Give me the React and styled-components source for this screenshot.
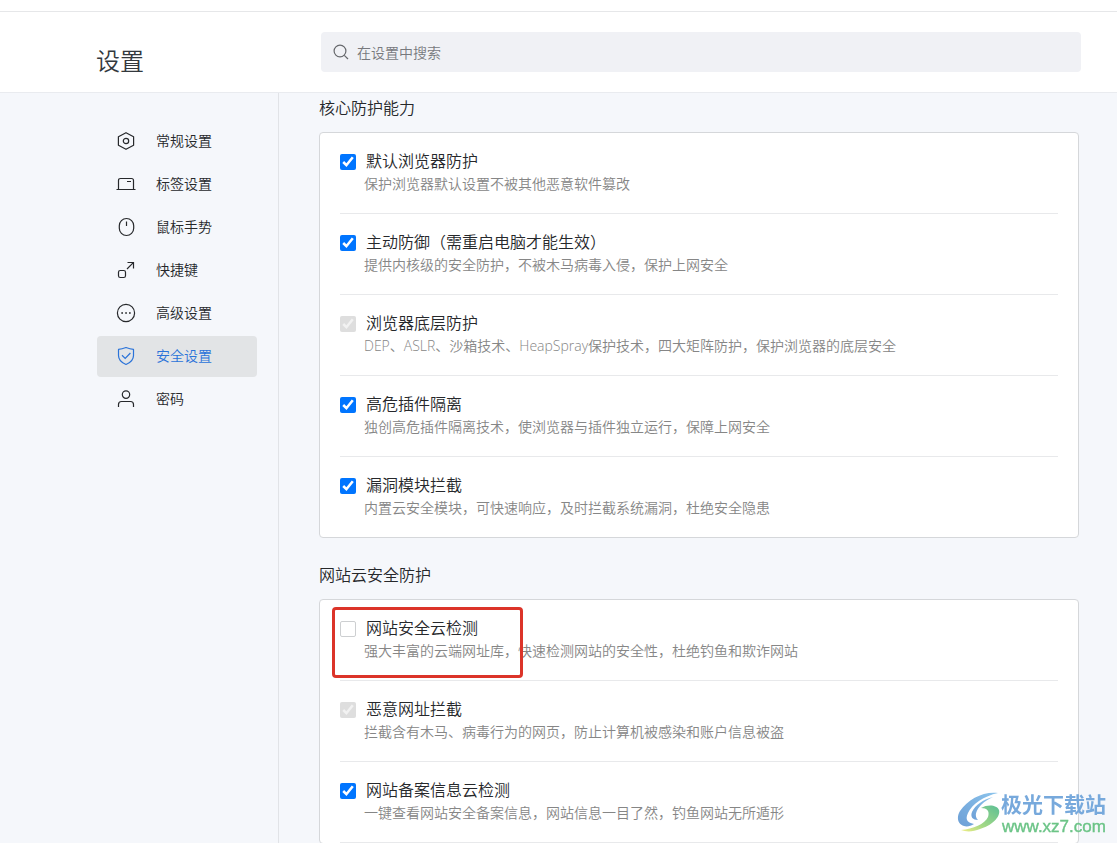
import React, { useState } from "react";
import styled, { createGlobalStyle } from "styled-components";

const GlobalStyle = createGlobalStyle`
  * { box-sizing: border-box; }
  body {
    margin: 0;
    background: #f5f7fb;
    color: #26282b;
    font-family: "Open Sans", "Noto Sans CJK SC", sans-serif;
    font-size: 14px;
    font-weight: 350;
  }
`;

const Page = styled.div`
  display: flex;
  flex-direction: column;
  height: 100vh;
  overflow: hidden;
`;

const TopStrip = styled.div`
  flex: none;
  height: 12px;
  background: #fff;
  border-bottom: 1px solid #e6e7e9;
`;

const Header = styled.header`
  flex: none;
  display: flex;
  align-items: flex-start;
  padding: 20px 36px 20px 96px;
  background: #fff;
  border-bottom: 1px solid #e9ebef;
`;

const PageTitle = styled.h1`
  flex: none;
  width: 225px;
  margin: 0;
  padding-top: 11px;
  font-size: 24px;
  line-height: 36px;
  height: 40px;
  font-weight: 350;
  color: #33383d;
`;

const SearchBox = styled.label`
  flex: 1;
  display: flex;
  align-items: center;
  gap: 8px;
  height: 40px;
  padding: 0 12px;
  border-radius: 4px;
  background: #f0f1f5;
`;

const SearchInput = styled.input`
  flex: 1;
  min-width: 0;
  padding: 2px 0 0;
  border: 0;
  outline: 0;
  background: transparent;
  font: inherit;
  line-height: 20px;
  color: #33383d;
  &::placeholder { color: #77797d; opacity: 1; }
`;

const Body = styled.div`
  flex: 1;
  min-height: 0;
  display: flex;
`;

const Sidebar = styled.nav`
  flex: none;
  display: flex;
  flex-direction: column;
  gap: 2px;
  width: 279px;
  padding: 28px 21px 0 97px;
  border-right: 1px solid #e1e3e7;
`;

const NavLink = styled.a`
  display: flex;
  align-items: center;
  gap: 20px;
  height: 41px;
  padding: 0 0 2px 19px;
  border-radius: 4px;
  line-height: 20px;
  text-decoration: none;
  color: ${(p) => (p.$active ? "#2a73d9" : "#26282b")};
  background: ${(p) => (p.$active ? "#e2e4e6" : "transparent")};
`;

const Icon = styled.svg`
  flex: none;
  fill: none;
  stroke: currentColor;
  stroke-width: 1.2;
`;

const SearchIcon = styled(Icon)`
  color: #66686c;
`;

const Content = styled.main`
  flex: 1;
  min-width: 0;
  display: flex;
  flex-direction: column;
  gap: 25px;
  padding: 3px 38px 0 40px;
  overflow: auto;
  scrollbar-width: none;
`;

const Section = styled.section`
  flex: none;
`;

const SectionTitle = styled.h2`
  margin: 0 0 12px;
  font-size: 16px;
  line-height: 24px;
  font-weight: inherit;
`;

const Card = styled.div`
  padding: 0 20px;
  border: 1px solid #d5d7da;
  border-radius: 4px;
  background: #fff;
`;

const Row = styled.div`
  position: relative;
  padding: 17px 0 19px;
  border-bottom: ${(p) => (p.$last ? "0" : "1px solid #e8e9eb")};
`;

const Option = styled.label`
  display: flex;
  align-items: center;
  gap: 10px;
  margin-bottom: 2px;
  font-size: 16px;
  line-height: 22px;
`;

const Checkbox = styled.input`
  flex: none;
  width: 16px;
  height: 16px;
  margin: 2px 0 0;
  &:not(:checked) {
    appearance: none;
    border: 1px solid #cdcfd1;
    border-radius: 2px;
    background: #fff;
  }
  &:disabled { opacity: 0.7; }
`;

const Description = styled.p`
  margin: 0;
  padding-left: 24px;
  line-height: 20px;
  color: #868686;
`;

const Highlight = styled.div`
  position: absolute;
  top: 7px;
  left: -8px;
  width: 191px;
  height: 71px;
  border: 3px solid #dc3429;
  border-radius: 4px;
  pointer-events: none;
`;

const Watermark = styled.div`
  position: fixed;
  right: 11px;
  bottom: 6px;
  display: flex;
  align-items: flex-end;
`;

const WatermarkText = styled.div`
  display: flex;
  flex-direction: column;
`;

const WatermarkName = styled.span`
  font-family: "Noto Sans CJK SC", sans-serif;
  font-size: 21px;
  line-height: 28px;
  font-weight: 700;
  color: #77a9dc;
`;

const WatermarkUrl = styled.span`
  padding-left: 1px;
  font-family: "Liberation Sans", sans-serif;
  font-size: 17px;
  line-height: 20px;
  color: #6cc487;
  -webkit-text-stroke: 0.4px #6cc487;
`;

const icons = {
  general: (
    <>
      <path d="M10 1.7 17.6 5.8V14.2L10 18.3 2.4 14.2V5.8Z" strokeLinejoin="round" />
      <circle cx="10" cy="10" r="2.7" />
    </>
  ),
  tabs: <path d="M.5 15.5H19.5M2.5 15.5V6.5Q2.5 4.5 4.5 4.5H15.5Q17.5 4.5 17.5 6.5V15.5M11 7.5H15" />,
  mouse: (
    <>
      <rect x="3.3" y="1.5" width="14.4" height="17" rx="7.2" />
      <path d="M10.5 4.5V9" />
    </>
  ),
  keys: (
    <>
      <rect x="2.5" y="10.5" width="7" height="7" rx="1.8" />
      <path d="M11 9 17.3 2.7M11.5 2.5H17.5V8.5" />
    </>
  ),
  advanced: (
    <>
      <circle cx="10" cy="10" r="8.6" />
      <path d="M5.3 10H7M9.2 10H10.9M13 10H14.7" strokeWidth="1.6" />
    </>
  ),
  security: (
    <>
      <path d="M2.5 3.4C5.6 3.1 7.4 2.5 10 1.5 12.6 2.5 14.4 3.1 17.5 3.4V9.5C17.5 13.9 14.4 16.7 10 18.5 5.6 16.7 2.5 13.9 2.5 9.5Z" strokeLinejoin="round" />
      <path d="M6 9.3 9.2 12.4 14.4 7" />
    </>
  ),
  password: (
    <>
      <circle cx="10" cy="5.6" r="3.7" />
      <path d="M2.5 18V15.5Q2.5 12.5 5.5 12.5H14.5Q17.5 12.5 17.5 15.5V18" />
    </>
  ),
};

const navItems = [
  { id: "general", label: "常规设置" },
  { id: "tabs", label: "标签设置" },
  { id: "mouse", label: "鼠标手势" },
  { id: "keys", label: "快捷键" },
  { id: "advanced", label: "高级设置" },
  { id: "security", label: "安全设置" },
  { id: "password", label: "密码" },
];

const coreOptions = [
  { id: "browser", title: "默认浏览器防护", text: "保护浏览器默认设置不被其他恶意软件篡改", on: true },
  { id: "active", title: "主动防御（需重启电脑才能生效）", text: "提供内核级的安全防护，不被木马病毒入侵，保护上网安全", on: true },
  { id: "base", title: "浏览器底层防护", text: "DEP、ASLR、沙箱技术、HeapSpray保护技术，四大矩阵防护，保护浏览器的底层安全", on: true, locked: true },
  { id: "plugin", title: "高危插件隔离", text: "独创高危插件隔离技术，使浏览器与插件独立运行，保障上网安全", on: true },
  { id: "leak", title: "漏洞模块拦截", text: "内置云安全模块，可快速响应，及时拦截系统漏洞，杜绝安全隐患", on: true, last: true },
];

const cloudOptions = [
  { id: "cloud", title: "网站安全云检测", text: "强大丰富的云端网址库，快速检测网站的安全性，杜绝钓鱼和欺诈网站", on: false, marked: true },
  { id: "malicious", title: "恶意网址拦截", text: "拦截含有木马、病毒行为的网页，防止计算机被感染和账户信息被盗", on: true, locked: true },
  { id: "record", title: "网站备案信息云检测", text: "一键查看网站安全备案信息，网站信息一目了然，钓鱼网站无所遁形", on: true },
];

function SettingRow({ option }) {
  const [on, setOn] = useState(option.on);
  return (
    <Row $last={option.last}>
      <Option htmlFor={option.id}>
        <Checkbox
          type="checkbox"
          id={option.id}
          checked={on}
          disabled={option.locked}
          aria-describedby={option.id + "-text"}
          onChange={(e) => setOn(e.target.checked)}
        />
        {option.title}
      </Option>
      <Description id={option.id + "-text"}>{option.text}</Description>
      {option.marked && <Highlight />}
    </Row>
  );
}

function SettingSection({ title, options }) {
  return (
    <Section>
      <SectionTitle>{title}</SectionTitle>
      <Card>
        {options.map((o) => (
          <SettingRow key={o.id} option={o} />
        ))}
      </Card>
    </Section>
  );
}

function Swirl() {
  return (
    <svg width="44" height="46" viewBox="0 0 44 46" aria-hidden="true">
      <defs>
        <linearGradient id="blue" x1="1" y1="0" x2="0" y2="1">
          <stop offset="0" stopColor="#8cc4ec" />
          <stop offset="1" stopColor="#6d9fd6" />
        </linearGradient>
        <linearGradient id="green" x1="1" y1="0" x2="0" y2="1">
          <stop offset="0" stopColor="#5cbf95" />
          <stop offset="0.6" stopColor="#a2d886" />
          <stop offset="1" stopColor="#f0ee86" />
        </linearGradient>
      </defs>
      <path d="M41 2C27 0 11 8 3 20-1 27 1 33 7 35 10 36 14 35 17 33 10 32 8 28 11 22 15 13 27 5 41 2Z" fill="url(#blue)" />
      <path d="M36 6C27 8 18 14 15 21 13 26 16 29 21 29 17 25 19 19 24 14 28 10 32 8 36 6Z" fill="url(#blue)" />
      <path d="M24 17C31 13 40 14 42 19 44 26 34 35 23 38 16 41 9 41 4 39 16 38 28 33 31 26 33 20 30 17 24 17Z" fill="url(#green)" />
    </svg>
  );
}

export default function App() {
  return (
    <Page>
      <GlobalStyle />
      <TopStrip />
      <Header>
        <PageTitle>设置</PageTitle>
        <SearchBox>
          <SearchIcon width="16" height="16" viewBox="0 0 16 16" aria-hidden="true">
            <circle cx="7" cy="7" r="5.9" />
            <path d="M11.3 11.3 15 15" />
          </SearchIcon>
          <SearchInput type="text" placeholder="在设置中搜索" aria-label="在设置中搜索" />
        </SearchBox>
      </Header>
      <Body>
        <Sidebar>
          {navItems.map((item) => (
            <NavLink key={item.id} href={"#" + item.id} $active={item.id === "security"}>
              <Icon width="20" height="20" viewBox="0 0 20 20" aria-hidden="true">
                {icons[item.id]}
              </Icon>
              {item.label}
            </NavLink>
          ))}
        </Sidebar>
        <Content>
          <SettingSection title="核心防护能力" options={coreOptions} />
          <SettingSection title="网站云安全防护" options={cloudOptions} />
        </Content>
      </Body>
      <Watermark>
        <Swirl />
        <WatermarkText>
          <WatermarkName>极光下载站</WatermarkName>
          <WatermarkUrl>www.xz7.com</WatermarkUrl>
        </WatermarkText>
      </Watermark>
    </Page>
  );
}
